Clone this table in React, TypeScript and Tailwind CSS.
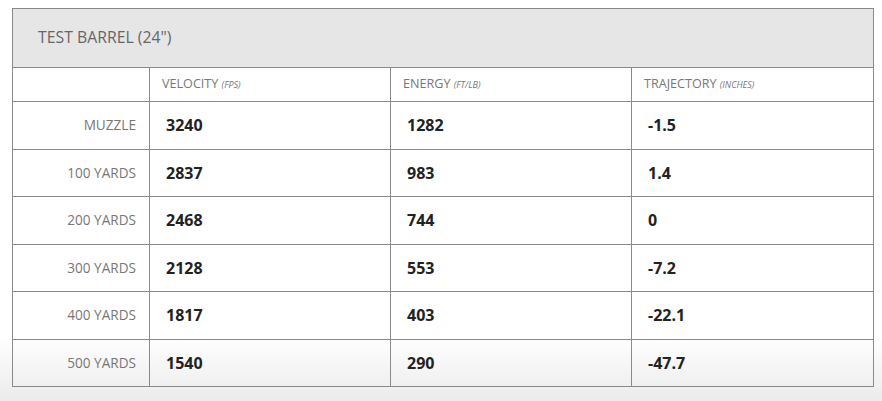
const rows = [
  { range: "MUZZLE", velocity: "3240", energy: "1282", trajectory: "-1.5" },
  { range: "100 YARDS", velocity: "2837", energy: "983", trajectory: "1.4" },
  { range: "200 YARDS", velocity: "2468", energy: "744", trajectory: "0" },
  { range: "300 YARDS", velocity: "2128", energy: "553", trajectory: "-7.2" },
  { range: "400 YARDS", velocity: "1817", energy: "403", trajectory: "-22.1" },
  { range: "500 YARDS", velocity: "1540", energy: "290", trajectory: "-47.7" },
];

const columns = [
  { label: "VELOCITY", unit: "(FPS)" },
  { label: "ENERGY", unit: "(FT/LB)" },
  { label: "TRAJECTORY", unit: "(INCHES)" },
];

export default function App() {
  return (
    <div
      className="min-h-[401px] w-full bg-[linear-gradient(to_bottom,#ffffff_84%,#ebebeb_100%)] px-[12px] pt-[8px]"
      style={{ fontFamily: '"Open Sans", "Liberation Sans", sans-serif' }}
    >
      <table className="w-[862px] table-fixed border-collapse border border-[#8a8a8a]">
        <colgroup>
          <col className="w-[137px]" />
          <col className="w-[241px]" />
          <col className="w-[241px]" />
          <col />
        </colgroup>
        <thead>
          <tr>
            <th
              colSpan={4}
              className="h-[59px] border border-[#8a8a8a] bg-[#e6e6e6] pl-[25px] text-left text-[15.8px] font-normal text-[#666666]"
            >
              TEST BARREL (24")
            </th>
          </tr>
          <tr>
            <th className="h-[34px] border border-[#8a8a8a]" />
            {columns.map((c) => (
              <th
                key={c.label}
                className="h-[34px] border border-[#8a8a8a] pl-[12px] text-left text-[12.6px] font-normal text-[#777777]"
              >
                {c.label} <span className="text-[9px] italic">{c.unit}</span>
              </th>
            ))}
          </tr>
        </thead>
        <tbody>
          {rows.map((r) => (
            <tr key={r.range}>
              <td className="h-[47.5px] border border-[#8a8a8a] pr-[13px] text-right text-[13.6px] text-[#777777]">
                {r.range}
              </td>
              <td className="border border-[#8a8a8a] pl-[16px] text-[16px] font-bold text-[#222222]">
                {r.velocity}
              </td>
              <td className="border border-[#8a8a8a] pl-[16px] text-[16px] font-bold text-[#222222]">
                {r.energy}
              </td>
              <td className="border border-[#8a8a8a] pl-[16px] text-[16px] font-bold text-[#222222]">
                {r.trajectory}
              </td>
            </tr>
          ))}
        </tbody>
      </table>
    </div>
  );
}
